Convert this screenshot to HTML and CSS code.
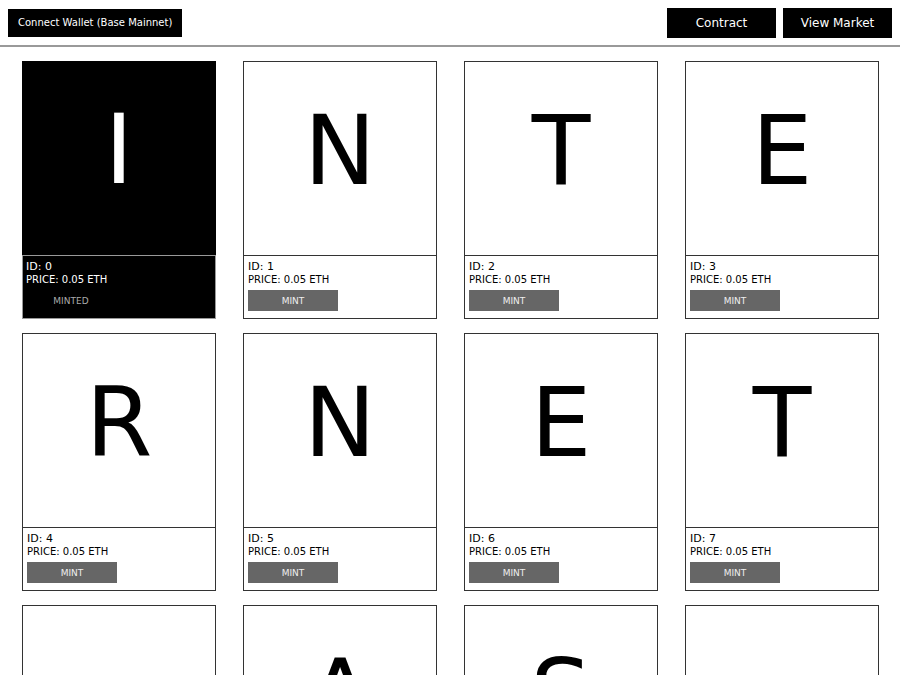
FILE: index.html
```html
<!DOCTYPE html>
<html>
<head>
<meta charset="utf-8">
<link rel="stylesheet" href="styles.css">
</head>
<body>
<header class="topbar">
  <button class="btn-connect">Connect Wallet (Base Mainnet)</button>
  <div class="nav">
    <button class="btn-nav">Contract</button>
    <button class="btn-nav">View Market</button>
  </div>
</header>
<main class="grid">
  <div class="card minted">
    <div class="art">I</div>
    <div class="info"><div class="id">ID: 0</div><div class="price">PRICE: 0.05 ETH</div><div class="minted-label">MINTED</div></div>
  </div>
  <div class="card">
    <div class="art">N</div>
    <div class="info"><div class="id">ID: 1</div><div class="price">PRICE: 0.05 ETH</div><button class="mint">MINT</button></div>
  </div>
  <div class="card">
    <div class="art">T</div>
    <div class="info"><div class="id">ID: 2</div><div class="price">PRICE: 0.05 ETH</div><button class="mint">MINT</button></div>
  </div>
  <div class="card">
    <div class="art">E</div>
    <div class="info"><div class="id">ID: 3</div><div class="price">PRICE: 0.05 ETH</div><button class="mint">MINT</button></div>
  </div>
  <div class="card">
    <div class="art">R</div>
    <div class="info"><div class="id">ID: 4</div><div class="price">PRICE: 0.05 ETH</div><button class="mint">MINT</button></div>
  </div>
  <div class="card">
    <div class="art">N</div>
    <div class="info"><div class="id">ID: 5</div><div class="price">PRICE: 0.05 ETH</div><button class="mint">MINT</button></div>
  </div>
  <div class="card">
    <div class="art">E</div>
    <div class="info"><div class="id">ID: 6</div><div class="price">PRICE: 0.05 ETH</div><button class="mint">MINT</button></div>
  </div>
  <div class="card">
    <div class="art">T</div>
    <div class="info"><div class="id">ID: 7</div><div class="price">PRICE: 0.05 ETH</div><button class="mint">MINT</button></div>
  </div>
  <div class="card">
    <div class="art">&nbsp;</div>
    <div class="info"><div class="id">ID: 8</div><div class="price">PRICE: 0.05 ETH</div><button class="mint">MINT</button></div>
  </div>
  <div class="card">
    <div class="art">A</div>
    <div class="info"><div class="id">ID: 9</div><div class="price">PRICE: 0.05 ETH</div><button class="mint">MINT</button></div>
  </div>
  <div class="card">
    <div class="art">S</div>
    <div class="info"><div class="id">ID: 10</div><div class="price">PRICE: 0.05 ETH</div><button class="mint">MINT</button></div>
  </div>
  <div class="card">
    <div class="art">&nbsp;</div>
    <div class="info"><div class="id">ID: 11</div><div class="price">PRICE: 0.05 ETH</div><button class="mint">MINT</button></div>
  </div>
</main>
</body>
</html>
```
FILE: styles.css
```css
html, body {
  margin: 0;
  padding: 0;
  background: #fff;
  font-family: "DejaVu Sans", "Liberation Sans", sans-serif;
  color: #000;
}

button {
  font-family: inherit;
  border: none;
  cursor: pointer;
}

.topbar {
  display: flex;
  justify-content: space-between;
  align-items: center;
  padding: 0 8px;
  border-bottom: 2px solid #999;
  box-sizing: border-box;
  height: 47px;
}

.btn-connect {
  background: #000;
  color: #fff;
  font-size: 10px;
  height: 28px;
  padding: 0 10px;
  white-space: nowrap;
}

.nav {
  display: flex;
  gap: 7px;
}

.btn-nav {
  background: #000;
  color: #fff;
  font-size: 12px;
  width: 109px;
  height: 30px;
  padding: 0;
}

.grid {
  display: grid;
  grid-template-columns: repeat(4, 194px);
  column-gap: 27px;
  row-gap: 14px;
  padding: 14px 21px 20px 22px;
}

.card {
  width: 194px;
  height: 258px;
  box-sizing: border-box;
  border: 1px solid #333;
  display: flex;
  flex-direction: column;
  background: #fff;
}

.art {
  height: 193px;
  box-sizing: border-box;
  padding-bottom: 16px;
  display: flex;
  align-items: center;
  justify-content: center;
  font-size: 96px;
  line-height: 1;
  flex-shrink: 0;
}

.info {
  flex: 1;
  border-top: 1px solid #333;
  padding: 3px 4px 0;
  display: flex;
  flex-direction: column;
  align-items: flex-start;
}

.id {
  font-size: 11px;
  line-height: 15px;
}

.price {
  font-size: 10px;
  line-height: 12px;
}

.mint {
  margin-top: 4px;
  width: 90px;
  height: 21px;
  background: #666;
  color: #eee;
  font-size: 9px;
  padding: 0;
}

.minted-label {
  margin-top: 4px;
  width: 90px;
  height: 21px;
  color: #aaa;
  font-size: 9px;
  display: flex;
  align-items: center;
  justify-content: center;
}

.card.minted {
  background: #000;
  color: #fff;
  border-color: #999;
}

.card.minted .art {
  margin: -1px -1px 0;
  height: 194px;
  background: #000;
}

.card.minted .info {
  border-top-color: #999;
  padding-left: 3px;
}
```
